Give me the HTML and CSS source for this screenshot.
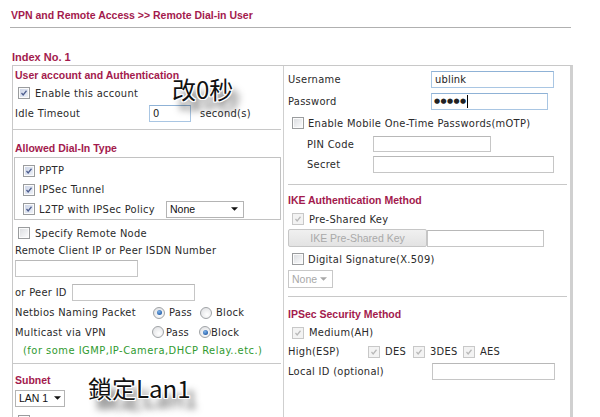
FILE: index.html
```html
<!DOCTYPE html>
<html>
<head>
<meta charset="utf-8">
<title>Remote Dial-in User</title>
<link rel="stylesheet" href="styles.css">
</head>
<body>
<div class="page">
  <h1 class="title">VPN and Remote Access &gt;&gt; Remote Dial-in User</h1>
  <div class="index">Index No. 1</div>
  <div class="panel">
    <div class="col left">
      <div class="h">User account and Authentication</div>
      <div class="row r18"><span class="cb on ml3"><svg viewBox="0 0 12 12"><path d="M3 6 L5 8.3 L9 3.3"/></svg></span><span>Enable this account</span></div>
      <div class="row r20 mt1"><span class="lbl w134">Idle Timeout</span><input class="inp w42" type="text" value="0"><span class="ml9">second(s)</span></div>
      <div class="sep sep-a"></div>
      <div class="h mt9">Allowed Dial-In Type</div>
      <div class="box">
        <div class="brow r19"><span class="cb on"><svg viewBox="0 0 12 12"><path d="M3 6 L5 8.3 L9 3.3"/></svg></span><span>PPTP</span></div>
        <div class="brow r19"><span class="cb on"><svg viewBox="0 0 12 12"><path d="M3 6 L5 8.3 L9 3.3"/></svg></span><span>IPSec Tunnel</span></div>
        <div class="brow r20"><span class="cb on"><svg viewBox="0 0 12 12"><path d="M3 6 L5 8.3 L9 3.3"/></svg></span><span class="w123">L2TP with IPSec Policy</span><span class="sel w78"><span>None</span><svg viewBox="0 0 8 4"><path d="M0 0 H8 L4 4 Z"/></svg></span></div>
      </div>
      <div class="row r18 mt4"><span class="cb ml3"></span><span>Specify Remote Node</span></div>
      <div class="row r16">Remote Client IP or Peer ISDN Number</div>
      <div class="row r20"><input class="inp w123 gray" type="text"></div>
      <div class="row r20 mt4"><span class="lbl w57">or Peer ID</span><input class="inp w123 gray" type="text"></div>
      <div class="row r21"><span class="lbl w138">Netbios Naming Packet</span><span class="rd on"></span><span class="opt w35">Pass</span><span class="rd"></span><span class="opt">Block</span></div>
      <div class="row r18"><span class="lbl w137">Multicast via VPN</span><span class="rd"></span><span class="opt2 w35">Pass</span><span class="rd on"></span><span>Block</span></div>
      <div class="row r19 green">(for some IGMP,IP-Camera,DHCP Relay..etc.)</div>
      <div class="sep sep-b"></div>
      <div class="h mt7">Subnet</div>
      <div class="row r18"><span class="sel w50 pr4"><span>LAN 1</span><svg viewBox="0 0 8 4"><path d="M0 0 H8 L4 4 Z"/></svg></span></div>
      <div class="row r18 mt5"><span class="cb ml3"></span><span>Assign Static IP Address</span></div>
    </div>
    <div class="col right">
      <div class="row r22 mt2"><span class="lbl w143">Username</span><input class="inp w123" type="text" value="ublink"></div>
      <div class="row r22"><span class="lbl w143">Password</span><span class="inp pw w117"><span class="dots">●●●●●</span><i class="caret"></i></span></div>
      <div class="row r22"><span class="cb ml4"></span><span class="t3">Enable Mobile One-Time Passwords(mOTP)</span></div>
      <div class="row r20 pl19"><span class="lbl w66">PIN Code</span><input class="inp w118 h16 gray" type="text"></div>
      <div class="row r20 pl19"><span class="lbl w66">Secret</span><input class="inp w181 gray" type="text"></div>
      <div class="sep sep-c"></div>
      <div class="h mt6">IKE Authentication Method</div>
      <div class="row r18 mt1"><span class="cb on dis ml4"><svg viewBox="0 0 12 12"><path d="M3 6 L5 8.3 L9 3.3"/></svg></span><span>Pre-Shared Key</span></div>
      <div class="row r20"><button class="btn" type="button" disabled>IKE Pre-Shared Key</button><input class="inp w117 gray ml5" type="text"></div>
      <div class="row r20 mt1"><span class="cb ml4"></span><span class="t3">Digital Signature(X.509)</span></div>
      <div class="row r19"><span class="sel dis w45"><span>None</span><svg viewBox="0 0 8 4"><path d="M0 0 H8 L4 4 Z"/></svg></span></div>
      <div class="sep sep-d"></div>
      <div class="h mt8">IPSec Security Method</div>
      <div class="row r19"><span class="cb on dis ml4"><svg viewBox="0 0 12 12"><path d="M3 6 L5 8.3 L9 3.3"/></svg></span><span>Medium(AH)</span></div>
      <div class="row r19"><span class="lbl w80">High(ESP)</span><span class="cb on dis"><svg viewBox="0 0 12 12"><path d="M3 6 L5 8.3 L9 3.3"/></svg></span><span class="w28">DES</span><span class="cb on dis"><svg viewBox="0 0 12 12"><path d="M3 6 L5 8.3 L9 3.3"/></svg></span><span class="w33">3DES</span><span class="cb on dis"><svg viewBox="0 0 12 12"><path d="M3 6 L5 8.3 L9 3.3"/></svg></span><span>AES</span></div>
      <div class="row r20"><span class="lbl w144">Local ID (optional)</span><input class="inp w123 gray" type="text"></div>
    </div>
  </div>
  <div class="note note-a">改0秒</div>
  <div class="note note-b">鎖定Lan1</div>
</div>
</body>
</html>
```

FILE: styles.css
```css
* { box-sizing: border-box; }

body {
  margin: 0;
  background: #fff;
  font-family: "DejaVu Sans Condensed", "DejaVu Sans", sans-serif;
  font-size: 11px;
  letter-spacing: 0.3px;
  color: #2a2a2a;
  overflow: hidden;
}

.page {
  position: relative;
  width: 600px;
  height: 417px;
  padding: 8px 0 0 10px;
}

.title {
  margin: 0;
  width: 561px;
  padding: 0 0 5px 1px;
  font: bold 10.5px/14px "Liberation Sans", Arial, sans-serif;
  letter-spacing: 0;
  color: #a31a4d;
  border-bottom: 1px solid #b0b0b0;
}

.index {
  margin-top: 22px;
  padding-left: 2px;
  height: 15px;
  font: bold 11px/15px "Liberation Sans", Arial, sans-serif;
  letter-spacing: 0;
  color: #a31a4d;
}

.panel {
  margin-left: 2px;
  width: 561px;
  height: 400px;
  display: grid;
  grid-template-columns: 271px 1fr;
  border: 1px solid #c8c8c8;
  border-right: 3px solid #d0d0d0;
  border-bottom: none;
}

.col.left { border-right: 1px solid #cfcfcf; }
.col.right { padding-left: 4px; }

.row {
  display: flex;
  align-items: center;
  white-space: nowrap;
}
.left .row { padding-left: 2px; }
.left .row.green { padding-left: 10px; }

.h {
  display: flex;
  align-items: center;
  height: 18px;
  font: bold 10.5px "Liberation Sans", Arial, sans-serif;
  letter-spacing: 0;
  color: #a31a4d;
  white-space: nowrap;
}
.left .h { padding-left: 2px; }

.r16 { height: 16px; }
.r18 { height: 18px; }
.r19 { height: 19px; }
.r20 { height: 20px; }
.r21 { height: 21px; }
.r22 { height: 22px; }

.mt1 { margin-top: 1px; }
.mt2 { margin-top: 2px; }
.mt4 { margin-top: 4px; }
.mt5 { margin-top: 5px; }
.mt6 { margin-top: 6px; }
.mt7 { margin-top: 7px; }
.mt8 { margin-top: 8px; }
.mt9 { margin-top: 9px; }
.ml3 { margin-left: 3px; }
.ml4 { margin-left: 4px; }
.ml5 { margin-left: 5px; }
.ml9 { margin-left: 9px; }
.pl19 { padding-left: 19px; }

.lbl { flex: none; }
.w28 { width: 28px; }
.w33 { width: 33px; }
.w35 { width: 35px; }
.w42 { width: 42px; }
.w45 { width: 45px; }
.w50 { width: 50px; }
.w57 { width: 57px; }
.w66 { width: 66px; }
.w78 { width: 78px; }
.w80 { width: 80px; }
.w117 { width: 117px; }
.w118 { width: 118px; }
.w123 { width: 123px; }
.w134 { width: 134px; }
.w137 { width: 137px; }
.w138 { width: 138px; }
.w143 { width: 143px; }
.w144 { width: 144px; }
.w181 { width: 181px; }

.sep { height: 1px; background: #c8c8c8; }
.sep-a { margin: 6px 2px 0 0; }
.sep-b { margin: 3px 2px 0 0; }
.sep-c { margin: 10px 3px 0 0; }
.sep-d { margin: 8px 3px 0 0; }

.box {
  margin: 0 2px 0 1px;
  padding: 3px 0 0 8px;
  border: 1px solid #c2c2c2;
}
.brow { display: flex; align-items: center; white-space: nowrap; gap: 4px; }

/* checkbox */
.cb {
  flex: none;
  width: 12px;
  height: 12px;
  border: 1px solid #9a9c9e;
  background: linear-gradient(135deg, #d9dbde 0%, #f2f3f5 70%, #fff 100%);
  box-shadow: inset 0 0 0 1px #fbfbfb;
  margin-right: 5px;
  display: inline-flex;
}
.brow .cb { margin-right: 0; }
.cb svg { width: 10px; height: 10px; }
.cb path { fill: none; stroke: #4d5d8e; stroke-width: 1.5; }
.cb.on { background: linear-gradient(135deg, #cbd3e6 0%, #e4e9f3 70%, #f4f6fa 100%); }
.cb.dis { border-color: #c8c8c8; background: #f3f3f3; box-shadow: none; }
.cb.dis path { stroke: #b8b8b8; }

.t3 { margin-left: -1px; }

/* radio */
.rd {
  flex: none;
  width: 12px;
  height: 12px;
  border-radius: 50%;
  border: 1px solid #a0a3a6;
  background: radial-gradient(circle at 60% 65%, #fff 0%, #e6e7e9 70%, #d2d4d7 100%);
  display: inline-flex;
  align-items: center;
  justify-content: center;
}
.rd.on::after {
  content: "";
  width: 5px;
  height: 5px;
  border-radius: 50%;
  background: radial-gradient(circle at 40% 35%, #7fb4ea 0%, #2a64ad 70%, #1d4f93 100%);
}
.opt { padding-left: 4px; }
.opt2 { padding-left: 2px; }

/* inputs */
.inp {
  flex: none;
  height: 17px;
  padding: 0 3px;
  border: 1px solid #a9c6e3;
  border-top-color: #8fb2d6;
  background: #fff;
  font: 11px "DejaVu Sans Condensed", "DejaVu Sans", sans-serif;
  letter-spacing: 0.2px;
  color: #222;
  outline: none;
  margin: 0;
}
.inp.gray { border-color: #c6c6c6; border-top-color: #b8b8b8; }
.inp.h16 { height: 16px; }
.pw { display: inline-flex; align-items: center; padding-left: 2px; }
.dots { font: 7px "DejaVu Sans", sans-serif; letter-spacing: 0.4px; color: #222; }
.caret { display: block; width: 1px; height: 13px; background: #000; margin-left: 0; }

/* select */
.sel {
  flex: none;
  display: inline-flex;
  align-items: center;
  justify-content: space-between;
  height: 17px;
  padding: 0 5px 0 3px;
  border: 1px solid #b4b4b4;
  background: #fff;
  font: 10.5px "Liberation Sans", Arial, sans-serif;
  letter-spacing: 0;
  color: #111;
}
.sel.pr4 { padding-right: 3px; font-size: 10.5px; }
.sel svg { width: 7px; height: 4px; }
.sel path { fill: #111; }
.sel.dis { height: 18px; color: #a8a8a8; border-color: #c8c8c8; }
.sel.dis path { fill: #a8a8a8; }

.btn {
  flex: none;
  width: 139px;
  height: 18px;
  padding: 0;
  border: 1px solid #c6c6c6;
  border-radius: 2px;
  background: linear-gradient(#f0f0f0, #e3e3e3);
  font: 10.5px "Liberation Sans", Arial, sans-serif;
  letter-spacing: 0;
  color: #a9a9a9;
}

.green { color: #2f9a2f; letter-spacing: 0.5px; }

/* annotations */
.note {
  position: absolute;
  font: 24px/1 "Noto Sans CJK TC", "Noto Sans CJK SC", sans-serif;
  letter-spacing: 0;
  color: #111;
  white-space: nowrap;
  text-shadow:
    -1px -1px 0 #fff, 1px -1px 0 #fff, -1px 1px 0 #fff, 1px 1px 0 #fff,
    0 -1px 0 #fff, 0 1px 0 #fff, -1px 0 0 #fff, 1px 0 0 #fff,
    7px 10px 7px rgba(0, 0, 0, 0.7);
}
.note-a { left: 172px; top: 77px; }
.note-b { left: 88px; top: 376px; }
```
